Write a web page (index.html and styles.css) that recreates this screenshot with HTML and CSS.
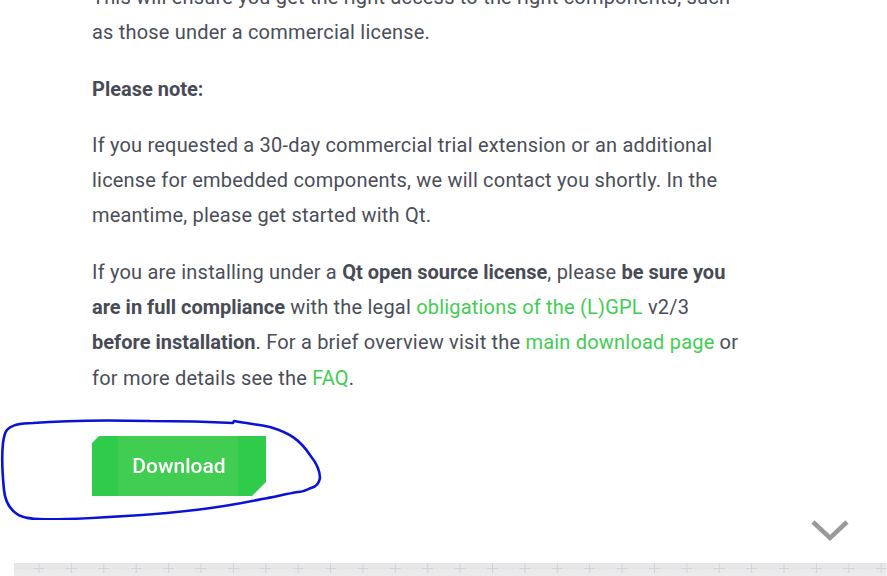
FILE: index.html
```html
<!DOCTYPE html>
<html lang="en">
<head>
<meta charset="utf-8">
<title>Qt download</title>
<link rel="stylesheet" href="styles.css">
</head>
<body>
<div class="page">
  <main class="content">
    <p>This will ensure you get the right access to the right components, such as those under a commercial license.</p>
    <p><strong>Please note:</strong></p>
    <p>If you requested a 30-day commercial trial extension or an additional license for embedded components, we will contact you shortly. In the meantime, please get started with Qt.</p>
    <p>If you are installing under a <strong>Qt open source license</strong>, please <strong>be sure you are in full compliance</strong> with the legal <a href="#">obligations of the (L)GPL</a> v2/3 <strong>before installation</strong>. For a brief overview visit the <a href="#">main download page</a> or for more details see the <a href="#">FAQ</a>.</p>
    <div class="actions">
      <a class="btn" href="#">Download</a>
    </div>
  </main>
  <div class="more">
    <svg class="chevron" width="40" height="24" viewBox="0 0 40 24"><path d="M3 3 L20 19 L37 3" fill="none" stroke="#9a9a9a" stroke-width="4.5"/></svg>
  </div>
  <div class="strip"></div>
  <svg class="scribble" width="330" height="110" viewBox="0 0 330 110">
    <path d="M7 20 C12 14 25 13 33 13 C70 10 110 10 150 11 C185 11 215 12 233 13 L234 11 C250 14 262 15 270 17 C290 23 300 30 310 45 C318 55 320 62 320 68 C319 74 315 77 311 78 C306 80 303 82 298 82 C285 84 275 87 262 89 C230 96 200 100 167 103 C130 106 100 108 67 109 C45 110 25 110 17 104 C8 98 5 90 4 80 C2 60 2 42 3 33 C4 26 5 22 7 20 Z" fill="none" stroke="#0a12d6" stroke-width="2.6" stroke-linecap="round" stroke-linejoin="round"/>
  </svg>
</div>
</body>
</html>
```
FILE: styles.css
```css
* { box-sizing: border-box; }
html, body { margin: 0; padding: 0; background: #ffffff; }
body {
  font-family: Roboto, "Open Sans", "Liberation Sans", sans-serif;
  color: #4a4e59;
  overflow: hidden;
  height: 576px;
}
.page {
  position: relative;
  width: 887px;
  height: 576px;
  overflow: hidden;
}
.content {
  margin-top: -20px;
  padding-left: 92px;
  width: 750px;
}
.content p {
  margin: 0 0 21px;
  font-size: 20px;
  line-height: 35.3px;
  letter-spacing: 0.2px;
}
.content strong { font-weight: 700; color: #474b55; letter-spacing: 0; }
.content a { color: #41cd52; text-decoration: none; }
.actions {
  padding-top: 19px;
  display: flex;
}
.content .btn {
  display: flex;
  align-items: center;
  justify-content: center;
  width: 174px;
  height: 60px;
  color: #ffffff;
  font-size: 21px;
  font-weight: 500;
  letter-spacing: 0;
  text-decoration: none;
  background: linear-gradient(90deg, #2fcb4b 0, #2fcb4b 26px, #41cd52 26px, #41cd52 146px, #2fcb4b 146px);
  clip-path: polygon(7px 0, 100% 0, 100% calc(100% - 14px), calc(100% - 14px) 100%, 0 100%, 0 7px);
  filter: drop-shadow(0 6px 10px rgba(65, 205, 82, 0.35));
}
.more {
  display: flex;
  justify-content: flex-end;
  padding: 23px 37px 0 0;
}
.strip {
  margin: 20px 0 0 14px;
  height: 14px;
  background-color: #e9e9ea;
  background-image:
    linear-gradient(90deg, transparent 24.5px, #d2d2d4 24.5px, #d2d2d4 25.5px, transparent 25.5px),
    linear-gradient(90deg, transparent 20px, #d2d2d4 20px, #d2d2d4 30px, transparent 30px),
    linear-gradient(90deg, #dddddf 50%, transparent 50%),
    linear-gradient(#e6e6e8, #ececed);
  background-size: 32.4px 10px, 32.4px 1px, 3px 1px, 100% 100%;
  background-position: 0 0, 0 5px, 0 5px, 0 0;
  background-repeat: repeat-x, repeat-x, repeat-x, no-repeat;
}
.scribble {
  position: absolute;
  left: 0;
  top: 410px;
}
```
